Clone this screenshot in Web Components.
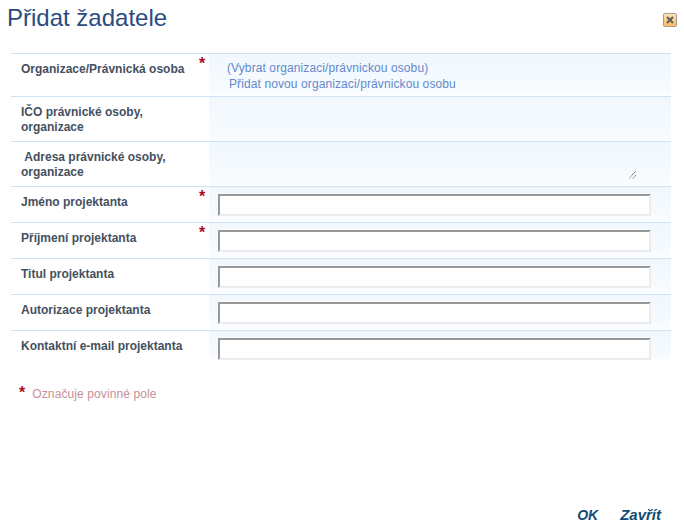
<!DOCTYPE html>
<html lang="cs">
<head>
<meta charset="utf-8">
<title>Přidat žadatele</title>
<style>
  html, body { margin: 0; height: 100%; background: #fff; }
  body { font-family: "Liberation Sans", Arial, sans-serif; }
</style>
</head>
<body>
<zadatel-dialog>
  <span slot="title">Přidat žadatele</span>
  <form-row height="43" required>
    <span slot="label">Organizace/Právnická osoba</span>
    <dialog-link indent="18">(Vybrat organizaci/právnickou osobu)</dialog-link>
    <dialog-link indent="20">Přidat novou organizaci/právnickou osobu</dialog-link>
  </form-row>
  <form-row height="45">
    <span slot="label">IČO právnické osoby,<br>organizace</span>
  </form-row>
  <form-row height="45" resizer>
    <span slot="label">&nbsp;Adresa právnické osoby,<br>organizace</span>
  </form-row>
  <form-row height="36" required input><span slot="label">Jméno projektanta</span></form-row>
  <form-row height="36" required input><span slot="label">Příjmení projektanta</span></form-row>
  <form-row height="36" input><span slot="label">Titul projektanta</span></form-row>
  <form-row height="36" input><span slot="label">Autorizace projektanta</span></form-row>
  <form-row height="30" input><span slot="label">Kontaktní e-mail projektanta</span></form-row>
</zadatel-dialog>

<script>
class DialogLink extends HTMLElement {
  constructor() {
    super();
    this.attachShadow({ mode: "open" }).innerHTML = /* html */ `
    <style>
      :host { display: block; height: 16px; line-height: 16px; font-size: 12px; letter-spacing: 0.1px; color: #6488cc; white-space: nowrap; cursor: pointer; }
    </style>
    <slot></slot>`;
  }
  connectedCallback() {
    this.style.paddingLeft = (this.getAttribute("indent") || 0) + "px";
  }
}

class FormRow extends HTMLElement {
  constructor() {
    super();
    this.attachShadow({ mode: "open" });
  }
  connectedCallback() {
    const star = this.hasAttribute("required") ? `<span class="star">*</span>` : "";
    const input = this.hasAttribute("input") ? `<input type="text">` : "";
    const resizer = this.hasAttribute("resizer")
      ? `<svg class="resizer" width="8" height="9" viewBox="0 0 8 9"><path d="M0 8.5 7 1M4 8.5 7 5" stroke="#555" stroke-dasharray="1 .6" fill="none"/></svg>`
      : "";
    this.shadowRoot.innerHTML = /* html */ `
    <style>
      :host { display: grid; grid-template-columns: 198px 1fr; box-sizing: border-box; height: ${this.getAttribute("height")}px; border-top: 1px solid #cfe1f5; }
      .label { position: relative; padding: 8px 0 0 10px; font-size: 12px; line-height: 15px; font-weight: bold; color: #44505f; }
      .star { position: absolute; left: 188px; top: 2px; font-size: 16px; line-height: 16px; font-weight: bold; color: #a80f1e; }
      .field { position: relative; padding: 6px 0 0 0; background: linear-gradient(#f1f8fd, #f5fafe 70%, #fbfdff); font-size: 12px; }
      input { display: block; box-sizing: border-box; width: 433px; height: 22px; margin: 1px 0 0 9px; padding: 0; background: #fff; border-style: solid; border-width: 2px; border-color: #989898 #ececec #ececec #989898; outline: 0; }
      .resizer { position: absolute; right: 34px; top: 28px; }
    </style>
    <div class="label"><slot name="label"></slot>${star}</div>
    <div class="field"><slot></slot>${input}${resizer}</div>`;
  }
}

class ZadatelDialog extends HTMLElement {
  constructor() {
    super();
    this.attachShadow({ mode: "open" }).innerHTML = /* html */ `
    <style>
      :host { display: flex; flex-direction: column; box-sizing: border-box; height: 526px; color: #44505f; }
      header { display: flex; justify-content: space-between; height: 53px; padding: 0 8px 0 7px; }
      h1 { margin: 4px 0 0; font-size: 24px; line-height: 28px; font-weight: normal; color: #2b4c80; }
      .close { width: 14px; height: 14px; margin-top: 13px; margin-right: -1px; }
      .rows { margin: 0 13px 0 11px; }
      .legend { display: flex; gap: 7px; margin: 25px 0 0 19px; font-size: 12px; line-height: 18px; letter-spacing: 0.1px; color: #c78f97; }
      .legend i { font-style: normal; font-weight: bold; font-size: 16px; line-height: 16px; color: #a80f1e; }
      footer { margin-top: auto; display: flex; justify-content: flex-end; align-items: baseline; gap: 22px; padding: 0 23px 2px 0; font-size: 15px; line-height: 18px; font-weight: bold; font-style: italic; color: #0f4a72; }
      .ok { font-size: 14px; }
    </style>
    <header>
      <h1><slot name="title"></slot></h1>
      <svg class="close" viewBox="0 0 14 14">
        <defs><linearGradient id="g" x1="0" y1="0" x2="0" y2="1"><stop offset="0" stop-color="#f7e6c0"/><stop offset="1" stop-color="#fdb95a"/></linearGradient></defs>
        <rect x=".5" y=".5" width="13" height="13" rx="1" fill="url(#g)" stroke="#a39c90"/>
        <path d="M4 4 10 10M10 4 4 10" stroke="#5f5c56" stroke-width="2" fill="none"/>
      </svg>
    </header>
    <div class="rows"><slot></slot></div>
    <div class="legend"><i>*</i><span>Označuje povinné pole</span></div>
    <footer><span class="ok">OK</span><span>Zavřít</span></footer>`;
  }
}

customElements.define("dialog-link", DialogLink);
customElements.define("form-row", FormRow);
customElements.define("zadatel-dialog", ZadatelDialog);
</script>
</body>
</html>
